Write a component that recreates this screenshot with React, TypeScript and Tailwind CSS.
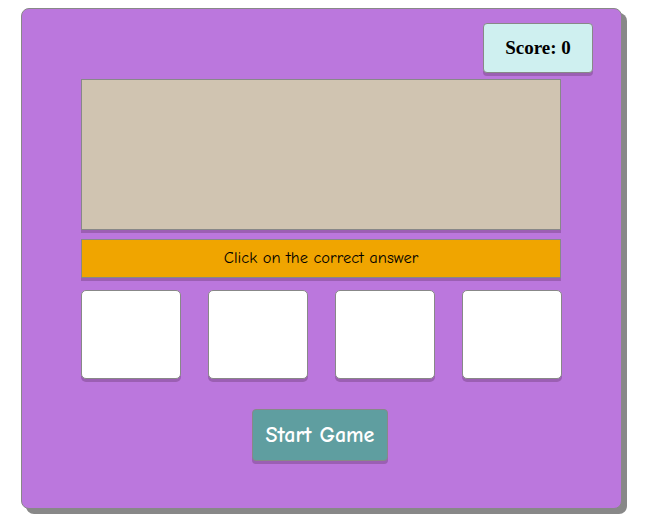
export default function App() {
  const comic = { fontFamily: '"Comic Sans MS", "Comic Neue", cursive' };
  return (
    <div className="w-[648px] h-[525px] bg-white overflow-hidden pt-[8px]">
      <div className="box-border w-[601px] h-[501px] ml-[21px] border border-[#888] rounded-[8px] bg-[#bb77dd] shadow-[5px_5px_0_#888] pt-[14px] flex flex-col items-start">
        <div className="box-border ml-[461px] w-[110px] h-[50px] flex items-center justify-center bg-[#cff0f0] border border-[#888] rounded-[4px] shadow-[0_3px_0_#9b5fb3] font-['Liberation_Serif',serif] font-bold text-[19px] text-black">
          Score: 0
        </div>
        <div className="box-border ml-[59px] mt-[6px] w-[480px] h-[151px] bg-[#d0c4b1] border border-[#888] shadow-[0_3px_0_#9b5fb3]" />
        <div
          className="box-border ml-[59px] mt-[9px] w-[480px] h-[39px] bg-[#f0a500] border border-[#888] shadow-[0_3px_0_#9b5fb3] flex items-center justify-center text-[16.5px] text-black"
          style={comic}
        >
          Click on the correct answer
        </div>
        <div className="ml-[59px] mt-[12px] w-[481px] flex justify-between">
          {[0, 1, 2, 3].map((i) => (
            <div
              key={i}
              className="box-border w-[100px] h-[89px] bg-white border border-[#888] rounded-[5px] shadow-[0_3px_0_#9b5fb3]"
            />
          ))}
        </div>
        <button
          className="box-border ml-[230px] mt-[30px] w-[136px] h-[52px] bg-[#5f9ea0] border border-[#888] rounded-[4px] shadow-[0_3px_0_#9b5fb3] text-white font-bold text-[22px]"
          style={comic}
        >
          Start Game
        </button>
      </div>
    </div>
  );
}
